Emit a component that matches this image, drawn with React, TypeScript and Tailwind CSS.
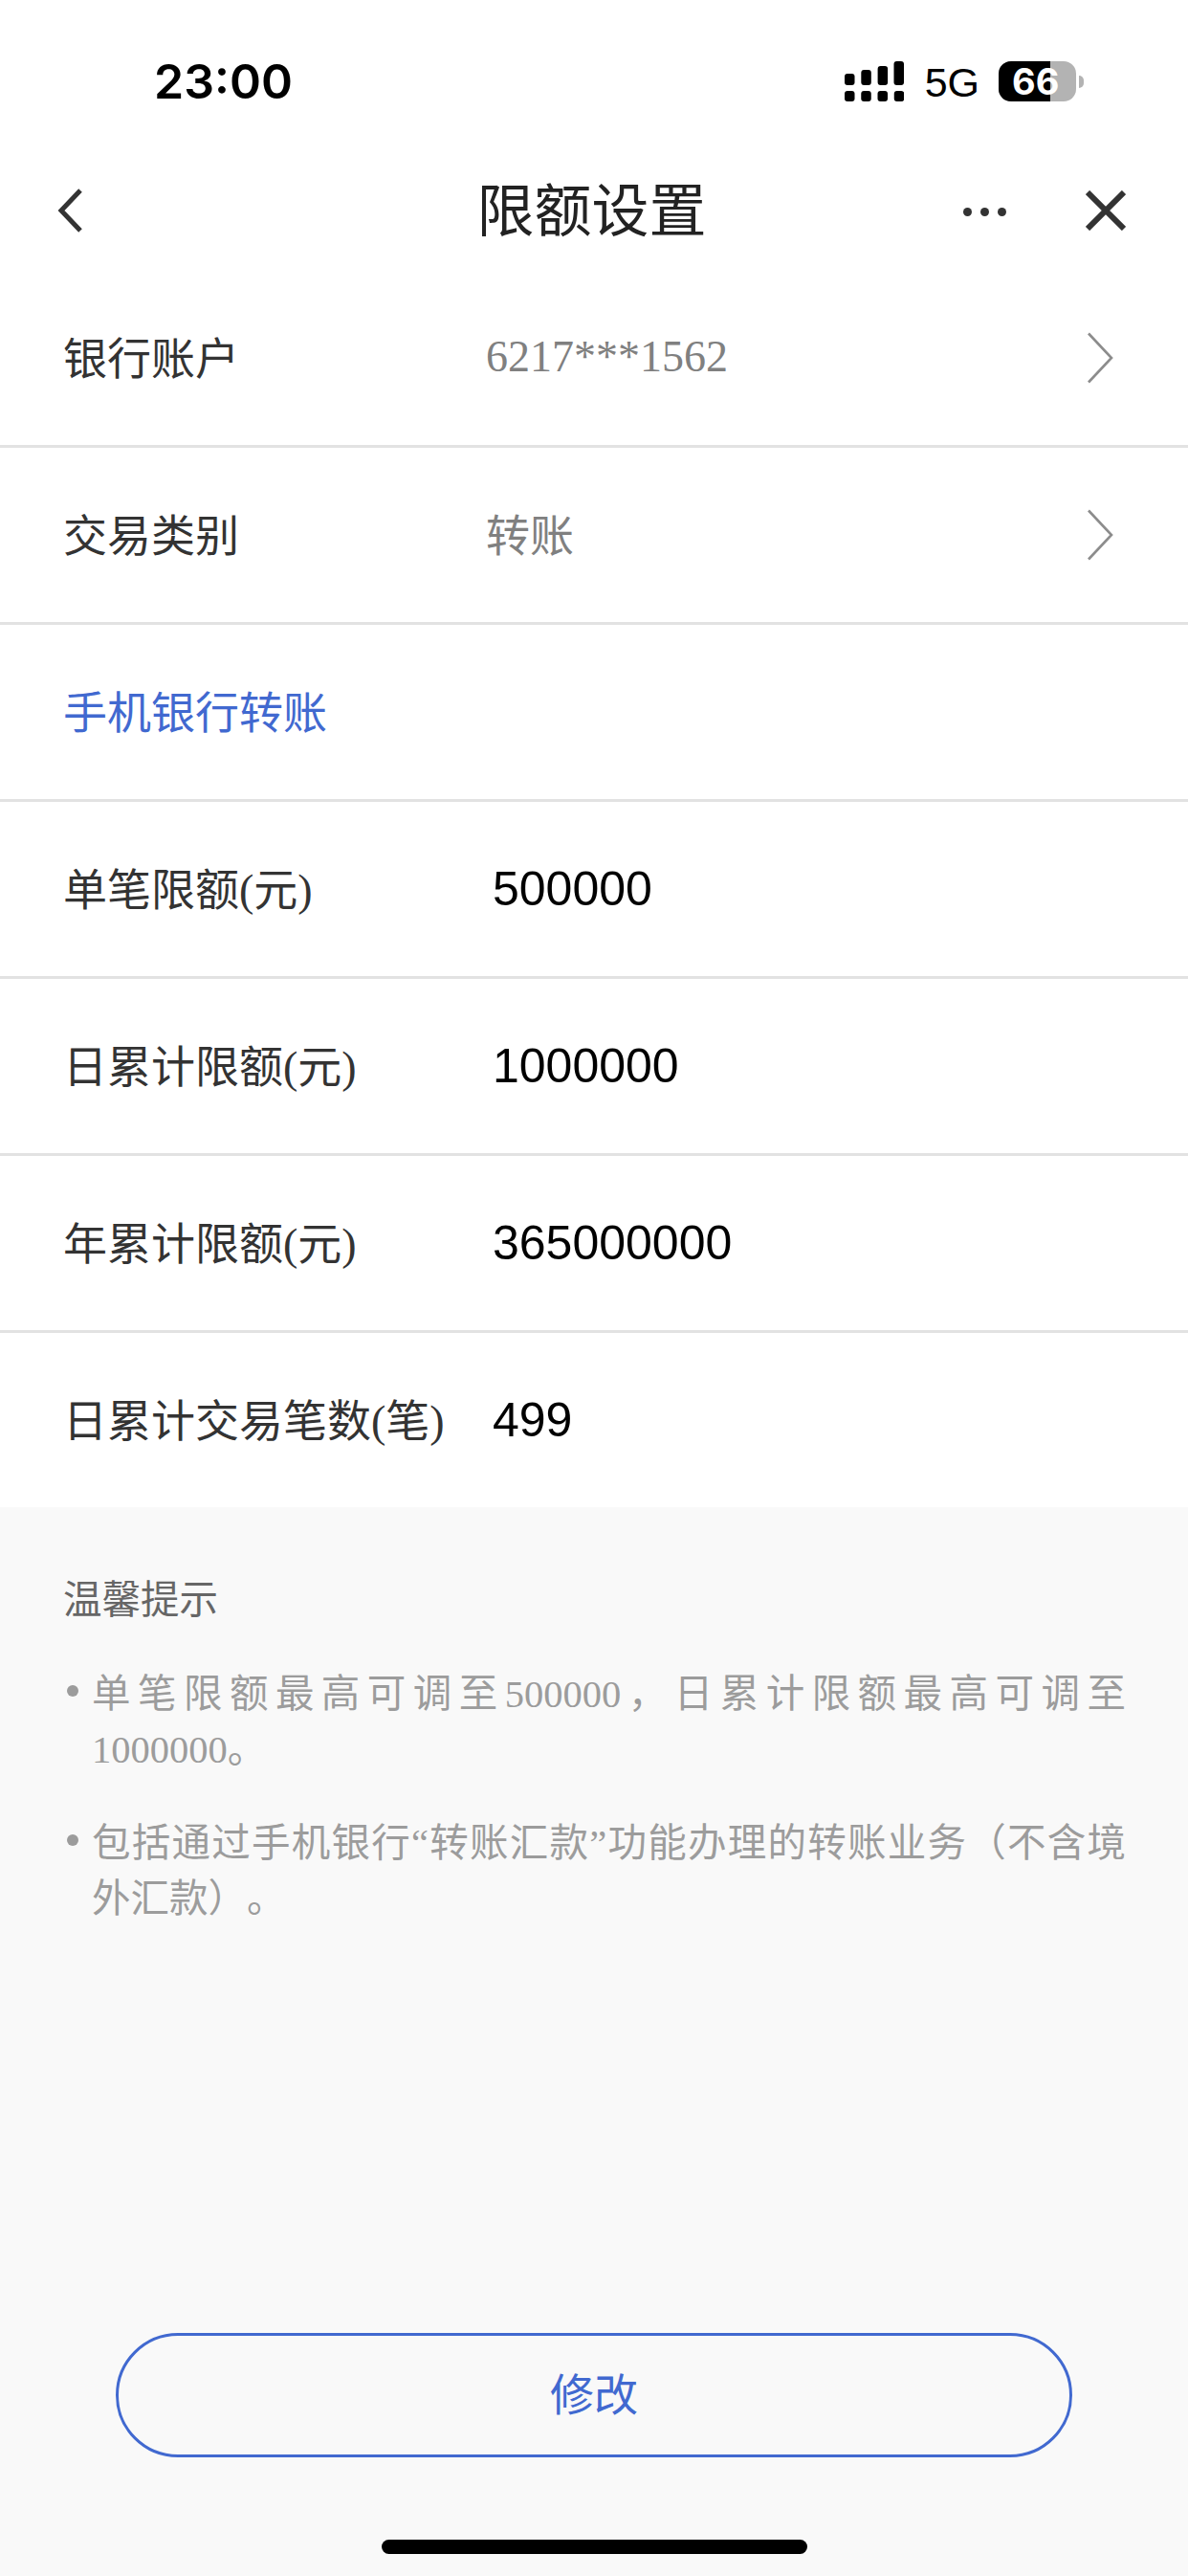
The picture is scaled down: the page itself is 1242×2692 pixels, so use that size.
const labelFont = "font-['Liberation_Serif','Noto_Sans_CJK_SC',serif]";
const numberFont = "font-['Liberation_Sans','Noto_Sans_CJK_SC',sans-serif]";

const limits = [
  { label: "单笔限额(元)", value: "500000" },
  { label: "日累计限额(元)", value: "1000000" },
  { label: "年累计限额(元)", value: "365000000" },
  { label: "日累计交易笔数(笔)", value: "499" },
];

const tips = [
  "单笔限额最高可调至500000，日累计限额最高可调至1000000。",
  "包括通过手机银行“转账汇款”功能办理的转账业务（不含境外汇款）。",
];

function SignalIcon() {
  const dots = [0, 1, 2, 3];
  return (
    <svg width="62" height="42" viewBox="0 0 62 42" fill="#000">
      <rect x="0" y="13" width="10.5" height="12" rx="3" />
      <rect x="17.3" y="9" width="10.5" height="16" rx="3" />
      <rect x="34.6" y="5" width="10.5" height="20" rx="3" />
      <rect x="51.5" y="0" width="10.5" height="25" rx="3" />
      {dots.map((i) => (
        <rect key={i} x={i * 17.25} y="31" width="10.5" height="11" rx="3" />
      ))}
    </svg>
  );
}

function Battery() {
  return (
    <div className="flex items-center">
      <div className="relative flex h-[42px] w-[81px] rounded-[13px] bg-[#b3b3b3]">
        <div className="h-full w-[54px] rounded-l-[13px] bg-black" />
        <span className="absolute left-[14px] top-0 text-[38px] font-bold leading-[42px] text-white font-['Inter',sans-serif]">
          66
        </span>
      </div>
      <div className="ml-[3px] h-[13px] w-[5px] rounded-r-full bg-[#b3b3b3]" />
    </div>
  );
}

function Chevron() {
  return (
    <svg width="28" height="54" viewBox="0 0 28 54" fill="none" className="shrink-0">
      <path d="M2 1.5 L26 27 L2 52.5" stroke="#8c8c8c" strokeWidth="2.6" />
    </svg>
  );
}

function Row({ children }: { children: React.ReactNode }) {
  return (
    <div className="flex h-[185px] items-center border-b-[3px] border-[#e2e2e2] pl-[66px] pr-[78px]">
      {children}
    </div>
  );
}

export default function App() {
  return (
    <div className={`flex min-h-[2692px] w-[1242px] flex-col bg-[#f9f9f9] ${labelFont}`}>
      <div className="bg-white">
        <div className="flex h-[160px] items-start justify-between pl-[161px] pr-[109px] pt-[56px]">
          <span className="text-[50px] font-semibold leading-[58px] text-black font-['Inter',sans-serif]">
            23:00
          </span>
          <div className="flex items-center pt-[7px]">
            <SignalIcon />
            <span className={`ml-[22px] mr-[20px] mt-[2px] text-[43px] leading-[42px] text-black ${numberFont}`}>
              5G
            </span>
            <Battery />
          </div>
        </div>

        <div className="grid h-[123px] grid-cols-[1fr_auto_1fr] items-center pl-[60px] pr-[65px]">
          <svg width="26" height="46" viewBox="0 0 26 46" fill="none" className="mb-[3px]">
            <path d="M24 2 L4 23 L24 44" stroke="#333" strokeWidth="5" />
          </svg>
          <div className="text-[60px] leading-[80px] text-[#222]">限额设置</div>
          <div className="flex items-center justify-end gap-[83px]">
            <div className="flex gap-[9px]">
              <div className="h-[9px] w-[9px] rounded-full bg-[#333]" />
              <div className="h-[9px] w-[9px] rounded-full bg-[#333]" />
              <div className="h-[9px] w-[9px] rounded-full bg-[#333]" />
            </div>
            <svg width="42" height="42" viewBox="0 0 42 42" fill="none" className="mb-[3px]">
              <path d="M2 2 L40 40 M40 2 L2 40" stroke="#333" strokeWidth="6" />
            </svg>
          </div>
        </div>

        <Row>
          <div className="mt-[3px] w-[442px] text-[46px] text-[#333]">银行账户</div>
          <div className="mb-[3px] flex-1 text-[46px] text-[#808080]">6217***1562</div>
          <Chevron />
        </Row>
        <Row>
          <div className="mt-[3px] w-[442px] text-[46px] text-[#333]">交易类别</div>
          <div className="mt-[3px] flex-1 text-[46px] text-[#808080]">转账</div>
          <Chevron />
        </Row>
        <Row>
          <div className="mt-[2px] text-[46px] text-[#4169d0]">手机银行转账</div>
        </Row>

        {limits.map((item, i) => (
          <div
            key={item.label}
            className={`flex items-center pl-[66px] ${
              i === limits.length - 1
                ? "h-[182px]"
                : "h-[185px] border-b-[3px] border-[#e2e2e2]"
            }`}
          >
            <div className="mt-[3px] w-[449px] shrink-0 whitespace-nowrap text-[46px] text-[#333]">
              {item.label}
            </div>
            <div className={`text-[50px] text-black ${numberFont}`}>{item.value}</div>
          </div>
        ))}
      </div>

      <div className="flex flex-1 flex-col pt-[72px]">
        <div className="pl-[66px] text-[40.5px] leading-[52px] text-[#666]">温馨提示</div>
        <div className="mt-[43px] flex flex-col gap-[40px] pl-[70px] pr-[65px]">
          {tips.map((tip) => (
            <div key={tip} className="flex">
              <div className="mr-[14px] mt-[19px] h-[12px] w-[12px] shrink-0 rounded-full bg-[#9c9c9c]" />
              <p className="flex-1 text-justify text-[40.5px] leading-[58px] text-[#9c9c9c] [text-spacing-trim:space-all]">
                {tip}
              </p>
            </div>
          ))}
        </div>

        <div className="mt-auto flex justify-center">
          <div className="flex h-[130px] w-[1000px] items-center justify-center rounded-full border-[3px] border-[#4169d0] text-[46px] text-[#4169d0]">
            修改
          </div>
        </div>
        <div className="mx-auto mb-[23px] mt-[86px] h-[15px] w-[445px] rounded-full bg-black" />
      </div>
    </div>
  );
}
